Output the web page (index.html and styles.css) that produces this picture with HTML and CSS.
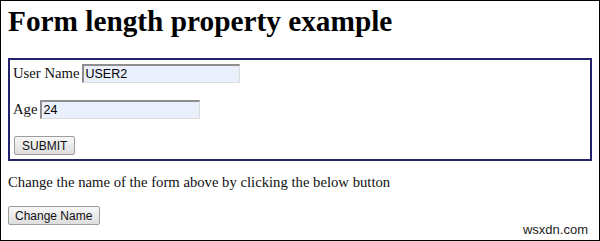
FILE: index.html
```html
<!DOCTYPE html>
<html lang="en">
  <head>
    <meta charset="UTF-8" />
    <meta name="viewport" content="width=device-width, initial-scale=1.0" />
    <title>Form length property example</title>
    <link rel="stylesheet" href="styles.css">
  </head>
  <body>
    <div class="page">
      <h1>Form length property example</h1>

      <form class="user-form" id="form1" name="FORM1">
        <div class="row">
          <label class="label" for="user">User Name</label>
          <input class="field field-user" type="text" id="user" value="USER2" />
        </div>
        <div class="row">
          <label class="label" for="age">Age</label>
          <input class="field field-age" type="text" id="age" value="24" />
        </div>
        <div class="row">
          <button type="button" class="btn">SUBMIT</button>
        </div>
      </form>

      <p class="note">Change the name of the form above by clicking the below button</p>
      <button type="button" class="btn btn-change" id="change-btn">Change Name</button>

      <span class="watermark">wsxdn.com</span>
    </div>
  </body>
</html>
```

FILE: styles.css
```css
html,
body {
  margin: 0;
  background-color: #fff;
}

.page {
  position: relative;
  box-sizing: border-box;
  width: 600px;
  height: 241px;
  padding: 7px;
  border: 1px solid #000;
  font-family: "Liberation Serif", "Times New Roman", serif;
  font-size: 14.7px;
  color: #111;
  overflow: hidden;
}

h1 {
  margin: 0 0 23px;
  font-size: 29.3px;
  line-height: 27px;
  font-weight: bold;
  color: #000;
}

.user-form {
  display: flex;
  flex-direction: column;
  gap: 17px;
  margin: 0;
  padding: 4px 3px 4px;
  border: 2px solid #23236b;
}

.row {
  display: flex;
  align-items: center;
  height: 19px;
}

.label {
  margin-right: 3px;
}

.field {
  box-sizing: border-box;
  height: 19px;
  width: 158px;
  margin: 0;
  padding: 0 1px;
  font-family: "Liberation Sans", Arial, sans-serif;
  font-size: 12.5px;
  color: #000;
  background-color: #e9f0fc;
  border-top: 2px solid #8e8e8e;
  border-left: 2px solid #8e8e8e;
  border-right: 1px solid #dcdcdc;
  border-bottom: 1px solid #dcdcdc;
  outline: none;
}

.field-age {
  width: 160px;
}

.btn {
  box-sizing: border-box;
  height: 19px;
  margin: 0 0 0 1px;
  padding: 0 7px;
  font-family: "Liberation Sans", Arial, sans-serif;
  font-size: 12px;
  color: #111;
  background: linear-gradient(#f7f7f7, #dedede);
  border: 1px solid #9d9d9d;
  border-radius: 2px;
  cursor: pointer;
}

.note {
  margin: 13px 0 15px;
  line-height: 17px;
}

.btn-change {
  margin-left: 0;
  padding: 0 7px 0 6px;
}

.watermark {
  position: absolute;
  right: 11px;
  bottom: 3px;
  font-family: "Liberation Sans", Arial, sans-serif;
  font-size: 13px;
  color: #222;
}
```
